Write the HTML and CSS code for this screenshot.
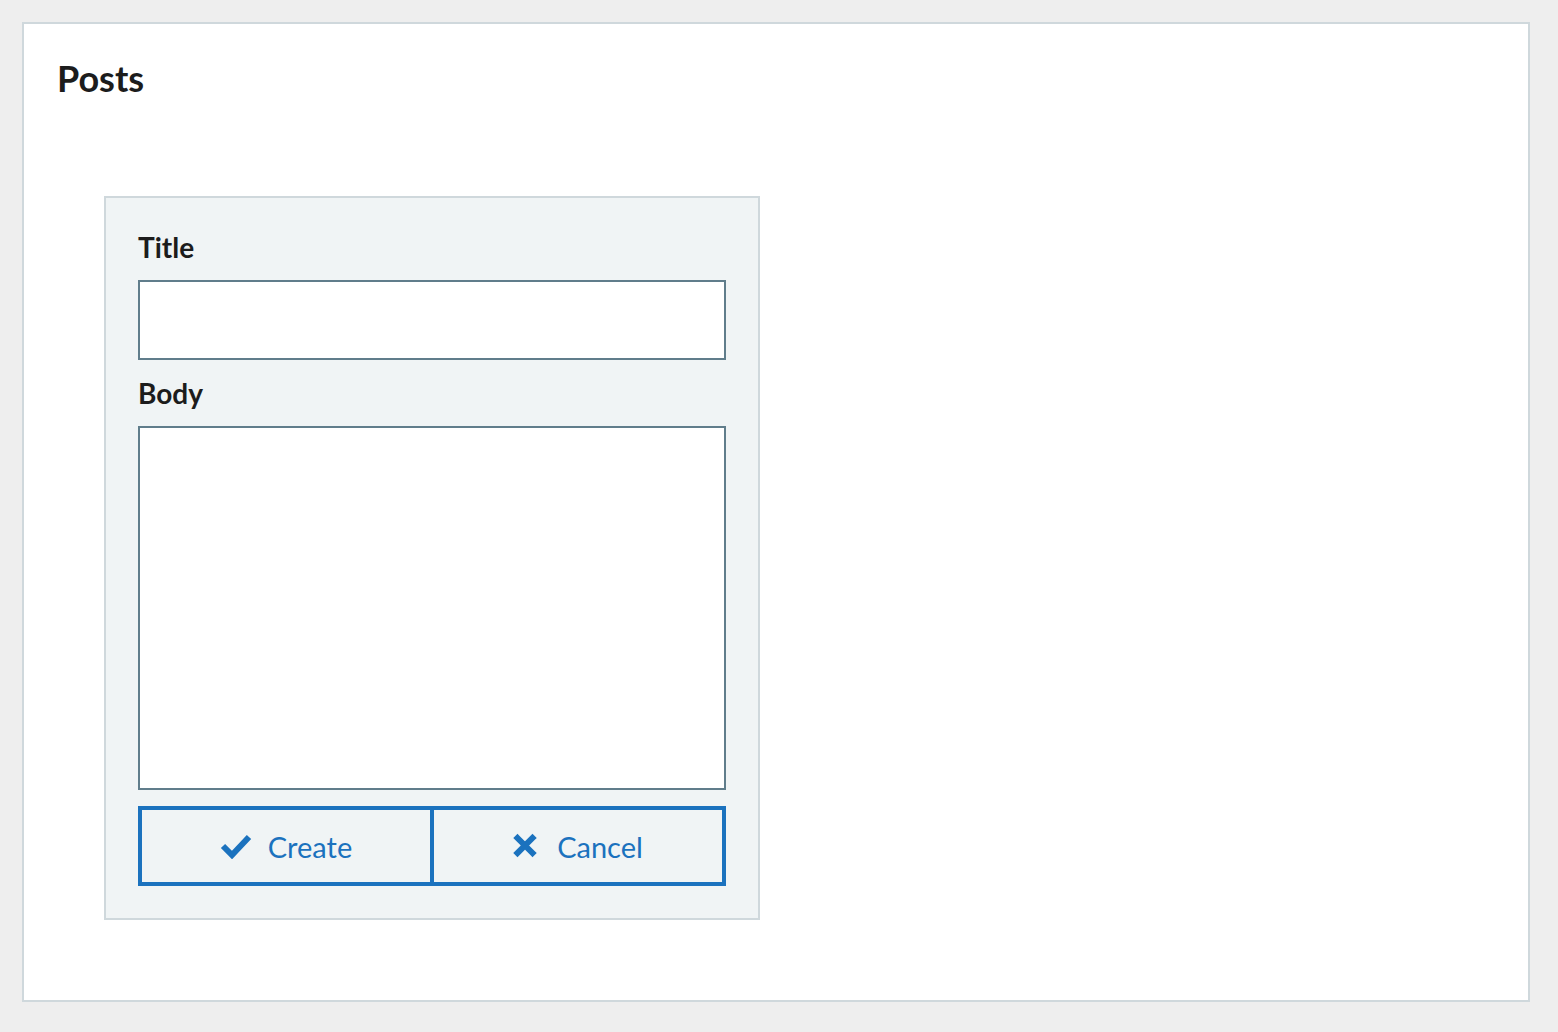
FILE: index.html
```html
<!DOCTYPE html>
<html lang="en">
<head>
<meta charset="utf-8">
<title>Posts</title>
<link rel="stylesheet" href="styles.css">
</head>
<body>
<main class="panel">
  <h1 class="panel-title">Posts</h1>
  <form class="post-form">
    <label class="field-label" for="title">Title</label>
    <input class="field-input" id="title" type="text">
    <label class="field-label" for="body">Body</label>
    <textarea class="field-textarea" id="body"></textarea>
    <div class="actions">
      <button type="button" class="btn">
        <svg class="icon-check" width="32" height="26" viewBox="0 0 32 26"><polyline points="3,13 12,22 29,4" fill="none" stroke="currentColor" stroke-width="6" stroke-linecap="butt" stroke-linejoin="miter"/></svg>
        <span>Create</span>
      </button>
      <button type="button" class="btn">
        <svg class="icon-x" width="24" height="25" viewBox="0 0 24 25"><path d="M4.5 5 L19.5 20 M19.5 5 L4.5 20" fill="none" stroke="currentColor" stroke-width="6" stroke-linecap="square"/></svg>
        <span>Cancel</span>
      </button>
    </div>
  </form>
</main>
</body>
</html>
```

FILE: styles.css
```css
* { box-sizing: border-box; }

html, body {
  margin: 0;
  background: #eeeeee;
}

body {
  padding: 22px 28px 30px 22px;
  font-family: Lato, "Open Sans", sans-serif;
  color: #1c1c1c;
}

.panel {
  background: #ffffff;
  border: 2px solid #cfd8dc;
  height: 980px;
  width: 1508px;
  padding: 33px 32px;
}

.panel-title {
  margin: 0 0 0 1px;
  font-size: 36px;
  line-height: 1.2;
  font-weight: 700;
}

.post-form {
  margin: 96px 0 0 48px;
  width: 656px;
  background: #f0f4f5;
  border: 2px solid #cfd8dc;
  padding: 32px 32px 32px;
  display: flex;
  flex-direction: column;
}

.field-label {
  display: block;
  font-size: 28px;
  line-height: 34px;
  font-weight: 700;
  margin-bottom: 16px;
}

.field-input,
.field-textarea {
  display: block;
  width: 100%;
  background: #ffffff;
  border: 2px solid #607d8b;
  border-radius: 0;
  margin: 0 0 16px 0;
  font-family: inherit;
  font-size: 20px;
  padding: 8px;
  outline: none;
}

.field-input { height: 80px; }

.field-textarea {
  height: 364px;
  resize: none;
}

.actions {
  display: flex;
}

.btn {
  flex: 1 1 0;
  height: 80px;
  background: transparent;
  border: 4px solid #1b72be;
  border-radius: 0;
  color: #1b72be;
  font-family: inherit;
  font-size: 29px;
  font-weight: 400;
  display: flex;
  align-items: center;
  justify-content: center;
  padding: 0;
  cursor: pointer;
}

.btn + .btn { margin-left: -4px; }

.icon-check { margin-right: 16px; margin-top: -1px; }
.icon-x { margin-right: 20px; margin-top: -2px; }
```
